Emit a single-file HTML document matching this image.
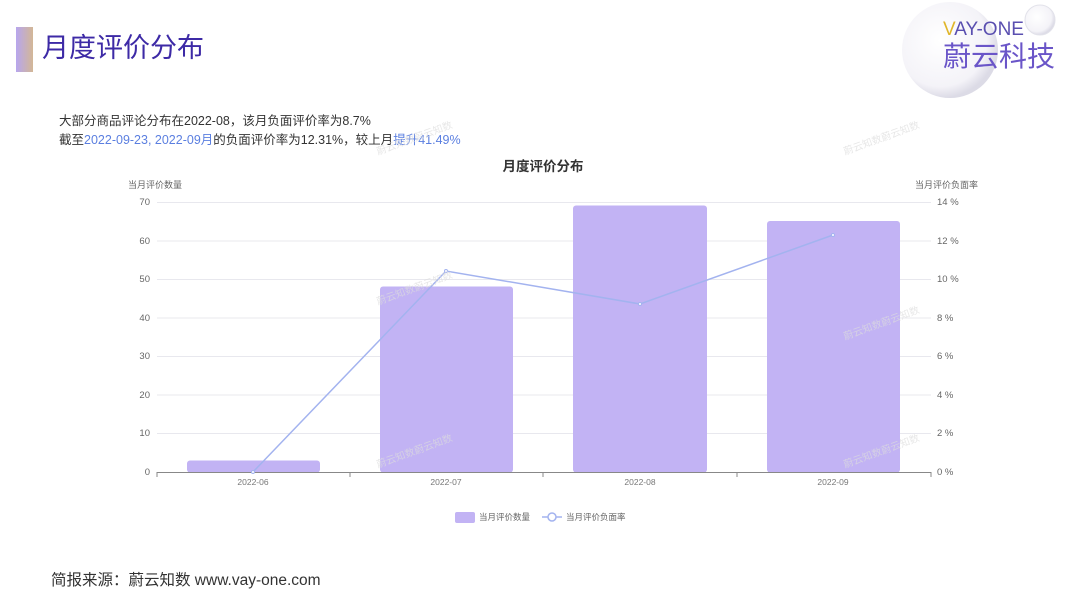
<!DOCTYPE html>
<html><head><meta charset="utf-8"><style>
*{margin:0;padding:0}
body{width:1067px;height:600px;background:#fff;position:relative;overflow:hidden;font-family:"Liberation Sans","Noto Sans CJK SC",sans-serif}
.bar{position:absolute;left:16px;top:27px;width:17px;height:45px;background:linear-gradient(90deg,#b7a6ee,#d3b796)}
.title{position:absolute;left:42px;top:28px;font-size:27px;color:#3d2aa6;line-height:40px}
.t{position:absolute;left:59px;font-size:12.5px;color:#333}
.b{color:#5b7fe0}
.foot{position:absolute;left:51px;top:568px;font-size:15.5px;color:#333}
.logo{position:absolute;left:900px;top:0;width:167px;height:125px}
</style></head><body>
<div class="bar"></div><div class="title">月度评价分布</div>
<div class="t" style="top:110px">大部分商品评论分布在2022-08，该月负面评价率为8.7%</div>
<div class="t" style="top:129px">截至<span class="b">2022-09-23, 2022-09月</span>的负面评价率为12.31%，较上月<span class="b">提升41.49%</span></div>
<svg class="logo" viewBox="0 0 167 125">
<defs><radialGradient id="g" cx="0.4" cy="0.4" r="0.6"><stop offset="0" stop-color="#fff"/><stop offset="0.8" stop-color="#f4f3f8"/><stop offset="1" stop-color="#dcdbe6"/></radialGradient></defs>
<circle cx="50" cy="50" r="48" fill="url(#g)"/>
<circle cx="140" cy="20" r="15" fill="url(#g)" stroke="#e2e2ea"/>
<text x="43" y="35" font-size="19" font-family="Liberation Sans" fill="#5a4fb0"><tspan fill="#e0b62a">V</tspan>AY-ONE</text>
<text x="43" y="66" font-size="28" font-family="Noto Sans CJK SC" fill="#6a55c8">蔚云科技</text>
</svg>
<svg style="position:absolute;left:0;top:0" width="1067" height="600" font-family="Liberation Sans,Noto Sans CJK SC,sans-serif">
<text x="543" y="171" font-size="13.5" font-weight="bold" fill="#333" text-anchor="middle">月度评价分布</text>
<text x="128" y="188" font-size="9" fill="#666">当月评价数量</text>
<text x="978" y="188" font-size="9" fill="#666" text-anchor="end">当月评价负面率</text>
<g stroke="#e8e8ee" stroke-width="1">
<line x1="157" x2="931" y1="202.5" y2="202.5"/><line x1="157" x2="931" y1="241" y2="241"/><line x1="157" x2="931" y1="279.5" y2="279.5"/><line x1="157" x2="931" y1="318" y2="318"/><line x1="157" x2="931" y1="356.5" y2="356.5"/><line x1="157" x2="931" y1="395" y2="395"/><line x1="157" x2="931" y1="433.5" y2="433.5"/>
</g>
<g font-size="9.5" fill="#666" text-anchor="end">
<text x="150" y="205">70</text><text x="150" y="244">60</text><text x="150" y="282">50</text><text x="150" y="321">40</text><text x="150" y="359">30</text><text x="150" y="398">20</text><text x="150" y="436">10</text><text x="150" y="475">0</text>
</g>
<g font-size="9.5" fill="#666">
<text x="937" y="205">14 %</text><text x="937" y="244">12 %</text><text x="937" y="282">10 %</text><text x="937" y="321">8 %</text><text x="937" y="359">6 %</text><text x="937" y="398">4 %</text><text x="937" y="436">2 %</text><text x="937" y="475">0 %</text>
</g>
<g fill="#c2b3f4">
<rect x="187" y="460.5" width="133" height="12" rx="3"/>
<rect x="380" y="286.5" width="133" height="186" rx="3"/>
<rect x="573" y="205.5" width="134" height="267" rx="3"/>
<rect x="767" y="221" width="133" height="251.5" rx="3"/>
</g>
<line x1="157" x2="931" y1="472.5" y2="472.5" stroke="#888"/>
<g stroke="#888"><line x1="157" x2="157" y1="472" y2="477"/><line x1="350" x2="350" y1="472" y2="477"/><line x1="543" x2="543" y1="472" y2="477"/><line x1="737" x2="737" y1="472" y2="477"/><line x1="931" x2="931" y1="472" y2="477"/></g>
<g font-size="8.5" fill="#777" text-anchor="middle"><text x="253" y="485">2022-06</text><text x="446" y="485">2022-07</text><text x="640" y="485">2022-08</text><text x="833" y="485">2022-09</text></g>
<polyline points="253,472 446,271 640,304 833,235" fill="none" stroke="#a3b3ef" stroke-width="1.5"/>
<g fill="#fff" stroke="#a3b3ef"><circle cx="253" cy="472" r="1.5"/><circle cx="446" cy="271" r="1.5"/><circle cx="640" cy="304" r="1.5"/><circle cx="833" cy="235" r="1.5"/></g>
<rect x="455" y="512" width="20" height="11" rx="2" fill="#c2b3f4"/>
<text x="479" y="520" font-size="8.5" fill="#666">当月评价数量</text>
<line x1="542" x2="562" y1="517" y2="517" stroke="#a3b3ef" stroke-width="1.5"/><circle cx="552" cy="517" r="4" fill="#fff" stroke="#a3b3ef" stroke-width="1.5"/>
<text x="566" y="520" font-size="8.5" fill="#666">当月评价负面率</text>
<g font-size="10" fill="#ddd" opacity="0.7">
<text transform="translate(378,305) rotate(-20)">蔚云知数蔚云知数</text>
<text transform="translate(378,468) rotate(-20)">蔚云知数蔚云知数</text>
<text transform="translate(845,340) rotate(-20)">蔚云知数蔚云知数</text>
<text transform="translate(845,468) rotate(-20)">蔚云知数蔚云知数</text>
<text transform="translate(845,155) rotate(-20)">蔚云知数蔚云知数</text>
<text transform="translate(378,155) rotate(-20)">蔚云知数蔚云知数</text>
</g>
</svg>
<div class="foot">简报来源：蔚云知数 www.vay-one.com</div>
</body></html>
